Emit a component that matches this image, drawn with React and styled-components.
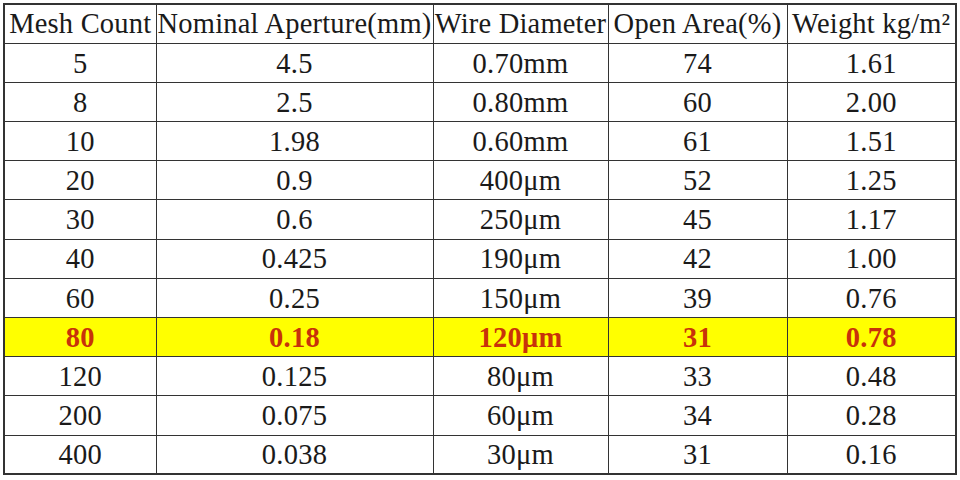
import React from 'react';
import styled, { createGlobalStyle } from 'styled-components';

const GlobalStyle = createGlobalStyle`
  html, body {
    margin: 0;
    padding: 0;
    background: #ffffff;
  }
`;

const Page = styled.div`
  width: 960px;
  height: 480px;
  padding: 3px 0 0 3px;
  box-sizing: border-box;
  overflow: hidden;
`;

const Table = styled.table`
  border-collapse: collapse;
  width: 952px;
  table-layout: fixed;
  font-family: "Liberation Serif", "Times New Roman", serif;
  font-size: 28.5px;
  color: #1a1a1a;
  border: 2px solid #333333;
`;

const Row = styled.tr`
  height: 39.2px;
  background: ${p => (p.$highlight ? '#ffff00' : '#ffffff')};
`;

const HeadCell = styled.th`
  font-weight: normal;
  border: 1.5px solid #333333;
  padding: 0;
  text-align: center;
  white-space: nowrap;
  letter-spacing: 0.2px;
  line-height: 1;
`;

const Cell = styled.td`
  border: 1.5px solid #333333;
  padding: 2px 0 0;
  text-align: center;
  line-height: 1;
  white-space: nowrap;
  letter-spacing: 0.3px;
  font-weight: ${p => (p.$highlight ? 'bold' : 'normal')};
  color: ${p => (p.$highlight ? '#c8320a' : '#1a1a1a')};
`;

const columns = [
  { label: 'Mesh Count', width: 152 },
  { label: 'Nominal Aperture(mm)', width: 277 },
  { label: 'Wire Diameter', width: 175 },
  { label: 'Open Area(%)', width: 179 },
  { label: 'Weight kg/m²', width: 169 },
];

const rows = [
  ['5', '4.5', '0.70mm', '74', '1.61'],
  ['8', '2.5', '0.80mm', '60', '2.00'],
  ['10', '1.98', '0.60mm', '61', '1.51'],
  ['20', '0.9', '400μm', '52', '1.25'],
  ['30', '0.6', '250μm', '45', '1.17'],
  ['40', '0.425', '190μm', '42', '1.00'],
  ['60', '0.25', '150μm', '39', '0.76'],
  ['80', '0.18', '120μm', '31', '0.78', true],
  ['120', '0.125', '80μm', '33', '0.48'],
  ['200', '0.075', '60μm', '34', '0.28'],
  ['400', '0.038', '30μm', '31', '0.16'],
];

const App = () => {
  return (
    <Page>
      <GlobalStyle />
      <Table>
        <colgroup>
          {columns.map(c => (
            <col key={c.label} style={{ width: c.width }} />
          ))}
        </colgroup>
        <thead>
          <Row>
            {columns.map(c => (
              <HeadCell key={c.label}>{c.label}</HeadCell>
            ))}
          </Row>
        </thead>
        <tbody>
          {rows.map(r => (
            <Row key={r[0]} $highlight={r[5]}>
              {r.slice(0, 5).map((v, i) => (
                <Cell key={i} $highlight={r[5]}>{v}</Cell>
              ))}
            </Row>
          ))}
        </tbody>
      </Table>
    </Page>
  );
};

export default App;
